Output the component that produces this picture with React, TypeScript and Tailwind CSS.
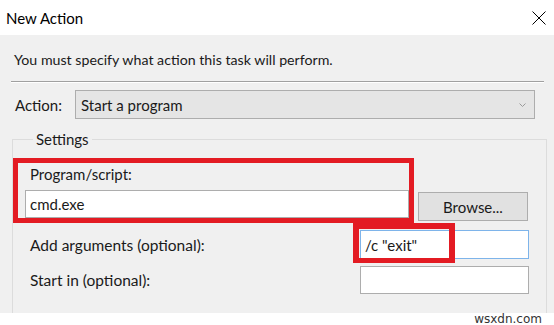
import React from "react";

export default function App() {
  return (
    <div
      className="relative w-[554px] h-[325px] bg-white overflow-hidden text-black"
      style={{ fontFamily: 'Lato, "Noto Sans", sans-serif' }}
    >
      {/* Title bar */}
      <div className="h-[35px] flex items-center justify-between pl-[6px] pr-[8px] bg-white">
        <span className="text-[15px] leading-[20px] text-[#000]">New Action</span>
        <svg width="14" height="14" viewBox="0 0 14 14">
          <path d="M0.5 0.5 L13.5 13.5 M13.5 0.5 L0.5 13.5" stroke="#000" strokeWidth="1" fill="none" />
        </svg>
      </div>

      {/* Body */}
      <div className="h-[278px] bg-[#f0f0f0] pl-[11px] pr-[10px] pt-[15px] overflow-hidden">
        <p className="ml-[3px] text-[14.2px] leading-[20px] text-[#1a1a1a]">
          You must specify what action this task will perform.
        </p>
        <div className="mt-[11px] border-t border-[#a0a0a0] border-b border-b-white" />

        {/* Action row */}
        <div className="mt-[7px] flex items-center">
          <span className="ml-[4px] w-[60px] text-[15px] leading-[20px] text-[#1a1a1a]">Action:</span>
          <div className="w-[460px] h-[29px] bg-[#e5e5e5] border border-[#adadad] flex items-center justify-between pl-[5px] pr-[8px]">
            <span className="text-[15px] leading-[20px] text-[#1a1a1a]">Start a program</span>
            <svg width="7" height="4" viewBox="0 0 7 4">
              <path d="M0.5 0.5 L3.5 3.5 L6.5 0.5" stroke="#9a9a9a" strokeWidth="1" fill="none" />
            </svg>
          </div>
        </div>

        {/* Settings group */}
        <fieldset className="mt-[10px] ml-[1px] w-[535px] h-[200px] border border-[#dcdcdc] pl-[12px] pr-[17px]">
          <legend className="ml-[8px] px-[3px] text-[15px] leading-[20px] text-[#1a1a1a]">Settings</legend>

          <div className="mt-[15px] ml-[5px] text-[15px] leading-[20px] text-[#1a1a1a]">Program/script:</div>
          <div className="mt-[6px] flex items-start">
            <div className="w-[384px] h-[28px] bg-white border border-[#adadad] flex items-center pl-[4px]">
              <span className="text-[15px] leading-[20px] text-[#1a1a1a]">cmd.exe</span>
            </div>
            <button className="ml-[9px] mt-[2px] w-[110px] h-[29px] bg-[#e1e1e1] border border-[#adadad] text-[15px] leading-[20px] text-[#1a1a1a]">
              Browse...
            </button>
          </div>

          <div className="mt-[9px] flex items-center">
            <span className="ml-[5px] w-[330px] text-[15.5px] leading-[20px] text-[#1a1a1a]">Add arguments (optional):</span>
            <div className="w-[169px] h-[29px] bg-white border border-[#7eb4ea] flex items-center pl-[4px]">
              <span className="text-[15px] leading-[20px] text-[#1a1a1a]">/c "exit"</span>
            </div>
          </div>

          <div className="mt-[7px] flex items-center">
            <span className="ml-[5px] w-[330px] text-[15.5px] leading-[20px] text-[#1a1a1a]">Start in (optional):</span>
            <div className="w-[169px] h-[28px] bg-white border border-[#adadad]" />
          </div>
        </fieldset>
      </div>

      {/* Footer / watermark */}
      <div className="h-[12px] bg-white flex justify-end items-start pr-[12px]">
        <span
          className="text-[12px] leading-[12px] text-[#333]"
          style={{ fontFamily: '"DejaVu Sans", sans-serif' }}
        >
          wsxdn.com
        </span>
      </div>

      {/* Red annotation boxes */}
      <div className="absolute left-[13px] top-[158px] w-[401px] h-[65px] border-[5px] border-[#e31b23] pointer-events-none" />
      <div className="absolute left-[353px] top-[223px] w-[102px] h-[40px] border-[6px] border-b-[5px] border-[#e31b23] pointer-events-none" />
    </div>
  );
}
